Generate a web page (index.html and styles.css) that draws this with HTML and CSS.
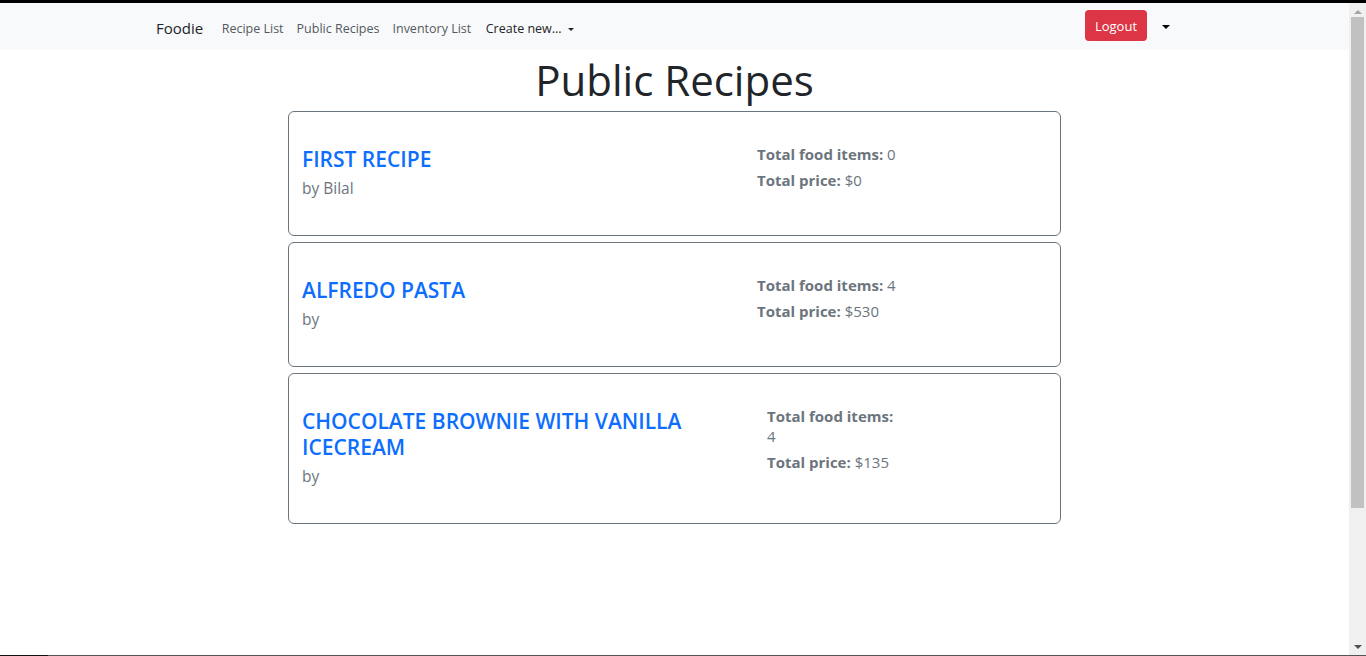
FILE: index.html
```html
<!DOCTYPE html>
<html lang="en">
<head>
<meta charset="utf-8">
<title>Foodie - Public Recipes</title>
<link rel="stylesheet" href="styles.css">
</head>
<body>
<div class="frame-top"></div>
<div class="app">
  <div class="viewport">
    <nav class="navbar">
      <a class="brand" href="#">Foodie</a>
      <ul class="nav-links">
        <li><a href="#">Recipe List</a></li>
        <li><a href="#">Public Recipes</a></li>
        <li><a href="#">Inventory List</a></li>
        <li><a class="dropdown" href="#">Create new... <span class="caret"></span></a></li>
      </ul>
      <div class="nav-right">
        <button class="btn-logout" type="button">Logout</button>
        <span class="caret caret-lg"></span>
      </div>
    </nav>
    <main class="content">
      <h1 class="page-title">Public Recipes</h1>
      <div class="recipe-list">
        <div class="recipe-card">
          <div class="recipe-main">
            <h4 class="recipe-name">FIRST RECIPE</h4>
            <p class="recipe-author">by Bilal</p>
          </div>
          <div class="recipe-stats">
            <p><strong>Total food items:</strong> 0</p>
            <p><strong>Total price:</strong> $0</p>
          </div>
        </div>
        <div class="recipe-card">
          <div class="recipe-main">
            <h4 class="recipe-name">ALFREDO PASTA</h4>
            <p class="recipe-author">by</p>
          </div>
          <div class="recipe-stats">
            <p><strong>Total food items:</strong> 4</p>
            <p><strong>Total price:</strong> $530</p>
          </div>
        </div>
        <div class="recipe-card">
          <div class="recipe-main recipe-main--long">
            <h4 class="recipe-name">CHOCOLATE BROWNIE WITH VANILLA ICECREAM</h4>
            <p class="recipe-author">by</p>
          </div>
          <div class="recipe-stats recipe-stats--narrow">
            <p><strong>Total food items:</strong> 4</p>
            <p><strong>Total price:</strong> $135</p>
          </div>
        </div>
      </div>
    </main>
  </div>
  <div class="scrollbar">
    <span class="sb-arrow sb-up"></span>
    <span class="sb-thumb"></span>
    <span class="sb-space"></span>
    <span class="sb-arrow sb-down"></span>
  </div>
</div>
<div class="frame-bottom"><span class="fb-dark"></span><span class="fb-grey"></span></div>
</body>
</html>
```
FILE: styles.css
```css
* { box-sizing: border-box; }
html, body { margin: 0; padding: 0; }
body {
  width: 1366px;
  height: 656px;
  overflow: hidden;
  background: #fff;
  font-family: "Open Sans", "Noto Sans", sans-serif;
  color: #212529;
}
.frame-top { height: 3px; background: #000; }
.frame-bottom { height: 1px; display: flex; }
.fb-dark { width: 48px; background: #111; }
.fb-grey { flex: 1; background: #555; }
.app { display: flex; height: 652px; }
.viewport { flex: 1; overflow: hidden; background: #fff; }

.navbar {
  height: 47px;
  background: #f8f9fa;
  display: flex;
  align-items: center;
  padding: 0 179px 0 156px;
}
.brand {
  font-size: 15px;
  color: #212529;
  text-decoration: none;
  margin-right: 12px;
  padding-top: 2px;
}
.nav-links {
  list-style: none;
  margin: 0;
  padding: 4px 0 0;
  display: flex;
  align-items: center;
}
.nav-links a {
  display: block;
  font-size: 12.5px;
  color: #555a5f;
  text-decoration: none;
  padding: 0 6.5px;
}
.nav-links a.dropdown { color: #212529; padding-left: 8px; }
.caret {
  display: inline-block;
  width: 0; height: 0;
  border-left: 3px solid transparent;
  border-right: 3px solid transparent;
  border-top: 3.5px solid currentColor;
  vertical-align: 2px;
  margin-left: 3px;
}
.nav-right { margin-left: auto; display: flex; align-items: center; }
.btn-logout {
  background: #dc3545;
  color: #fff;
  border: none;
  border-radius: 4px;
  height: 31px;
  width: 62px;
  font-family: inherit;
  font-size: 13px;
  padding: 0;
  margin-bottom: 2px;
}
.caret-lg {
  border-left-width: 4px;
  border-right-width: 4px;
  border-top-width: 4px;
  color: #000;
  margin-left: 15px;
}

.content { padding: 0 288px; }
.page-title {
  margin: 3px 0 5px;
  text-align: center;
  font-size: 42px;
  font-weight: 400;
  line-height: 53px;
  color: #212529;
}
.recipe-list { display: flex; flex-direction: column; gap: 6px; }
.recipe-card {
  border: 1px solid #6c757d;
  border-radius: 6px;
  padding: 34px 13px 35px;
  display: flex;
  align-items: flex-start;
}
.recipe-main { width: 455px; }
.recipe-main--long { width: 465px; }
.recipe-name {
  margin: 0 0 4px;
  font-size: 21px;
  line-height: 26px;
  font-weight: 600;
  color: #0d6efd;
  width: 420px;
}
.recipe-author {
  margin: 0;
  font-size: 15.5px;
  line-height: 24px;
  color: #6c757d;
}
.recipe-stats { margin-top: -2px; color: #6c757d; font-size: 15px; }
.recipe-stats--narrow { width: 128px; }
.recipe-stats p { margin: 0 0 6px; line-height: 20px; }
.recipe-stats strong { font-weight: 700; }

.scrollbar {
  width: 17px;
  background: #f0f0f0;
  display: flex;
  flex-direction: column;
  align-items: center;
}
.sb-arrow {
  width: 0; height: 0;
  border-left: 4px solid transparent;
  border-right: 4px solid transparent;
}
.sb-up { border-bottom: 4px solid #a3a3a3; margin: 7px 0 3px; }
.sb-down { border-top: 4px solid #505050; margin: 3px 0 6px; }
.sb-thumb { width: 13px; height: 491px; background: #c1c1c1; }
.sb-space { flex: 1; }
```
